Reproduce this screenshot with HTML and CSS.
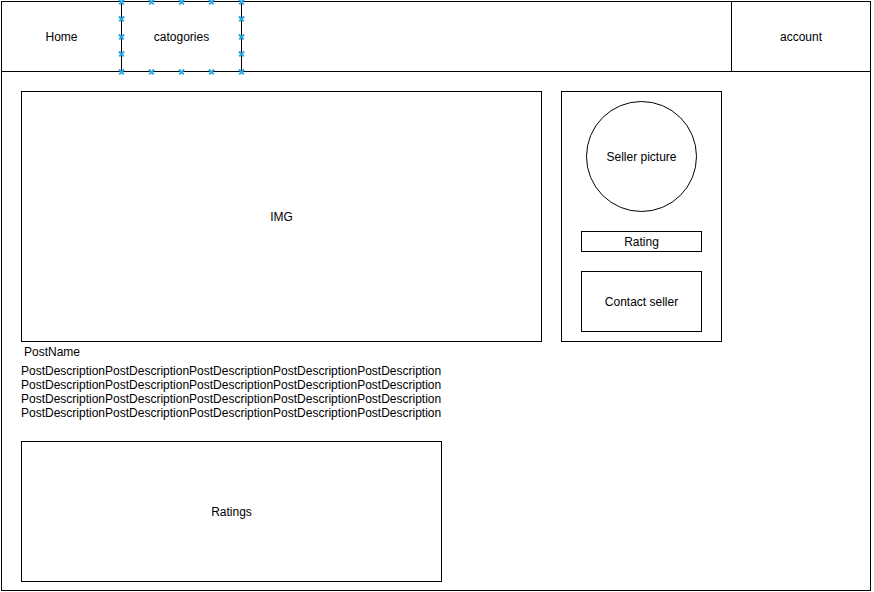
FILE: index.html
```html
<!DOCTYPE html>
<html lang="en">
<head>
<meta charset="utf-8">
<title>Post page wireframe</title>
<link rel="stylesheet" href="styles.css">
</head>
<body>
<div class="frame">
  <header class="topbar">
    <div class="nav-cell home">Home</div>
    <div class="nav-cell cats">catogories
      <span class="hd hx0 hy0"></span><span class="hd hx1 hy0"></span><span class="hd hx2 hy0"></span><span class="hd hx3 hy0"></span><span class="hd hx4 hy0"></span>
      <span class="hd hx0 hy1"></span><span class="hd hx4 hy1"></span>
      <span class="hd hx0 hy2"></span><span class="hd hx4 hy2"></span>
      <span class="hd hx0 hy3"></span><span class="hd hx4 hy3"></span>
      <span class="hd hx0 hy4"></span><span class="hd hx1 hy4"></span><span class="hd hx2 hy4"></span><span class="hd hx3 hy4"></span><span class="hd hx4 hy4"></span>
    </div>
    <div class="spacer"></div>
    <div class="nav-cell account">account</div>
  </header>
  <main class="content">
    <section class="left-col">
      <div class="img-box">IMG</div>
      <div class="post-name">PostName</div>
      <div class="post-desc">PostDescriptionPostDescriptionPostDescriptionPostDescriptionPostDescription<br>PostDescriptionPostDescriptionPostDescriptionPostDescriptionPostDescription<br>PostDescriptionPostDescriptionPostDescriptionPostDescriptionPostDescription<br>PostDescriptionPostDescriptionPostDescriptionPostDescriptionPostDescription</div>
      <div class="ratings-box">Ratings</div>
    </section>
    <aside class="seller">
      <div class="seller-pic">Seller picture</div>
      <div class="seller-rating">Rating</div>
      <div class="seller-contact">Contact seller</div>
    </aside>
  </main>
</div>
</body>
</html>
```

FILE: styles.css
```css
* { box-sizing: border-box; }
html, body { margin: 0; padding: 0; background: #fff; }
body {
  font-family: "Liberation Sans", Arial, sans-serif;
  font-size: 12px;
  line-height: 14px;
  color: #000;
}
.frame {
  margin: 1px 0 0 1px;
  width: 870px;
  height: 590px;
  border: 1px solid #000;
}
.topbar {
  display: flex;
  height: 70px;
  border-bottom: 1px solid #000;
}
.nav-cell {
  display: flex;
  align-items: center;
  justify-content: center;
}
.home { width: 120px; border-right: 1px solid #000; }
.cats { width: 120px; border-right: 1px solid #000; position: relative; }
.spacer { flex: 1; }
.account { width: 139px; border-left: 1px solid #000; }

.hd {
  position: absolute;
  width: 7px;
  height: 7px;
  margin: -3px 0 0 -3px;
}
.hd::before,
.hd::after {
  content: "";
  position: absolute;
  left: 0;
  top: 3px;
  width: 7px;
  height: 1.5px;
  background: #29a9e6;
  transform: rotate(45deg);
}
.hd::after { transform: rotate(-45deg); }
.hx0 { left: -1px; }
.hx1 { left: 29px; }
.hx2 { left: 59px; }
.hx3 { left: 89px; }
.hx4 { left: 119px; }
.hy0 { top: -1px; }
.hy1 { top: 16px; }
.hy2 { top: 34px; }
.hy3 { top: 51px; }
.hy4 { top: 69px; }

.content {
  display: flex;
  align-items: flex-start;
  gap: 19px;
  padding: 19px 0 0 19px;
}
.left-col {
  width: 521px;
  display: flex;
  flex-direction: column;
}
.img-box {
  height: 251px;
  border: 1px solid #000;
  display: flex;
  align-items: center;
  justify-content: center;
}
.post-name {
  margin-top: 3px;
  padding-left: 3px;
  height: 14px;
}
.post-desc {
  margin-top: 5px;
  white-space: nowrap;
}
.ratings-box {
  margin-top: 21px;
  width: 421px;
  height: 141px;
  border: 1px solid #000;
  display: flex;
  align-items: center;
  justify-content: center;
}
.seller {
  width: 161px;
  height: 251px;
  border: 1px solid #000;
  display: flex;
  flex-direction: column;
  align-items: center;
  padding-top: 9px;
  gap: 19px;
}
.seller-pic {
  width: 111px;
  height: 111px;
  border: 1px solid #000;
  border-radius: 50%;
  display: flex;
  align-items: center;
  justify-content: center;
}
.seller-rating {
  width: 121px;
  height: 21px;
  border: 1px solid #000;
  display: flex;
  align-items: center;
  justify-content: center;
}
.seller-contact {
  width: 121px;
  height: 61px;
  border: 1px solid #000;
  display: flex;
  align-items: center;
  justify-content: center;
}
```
